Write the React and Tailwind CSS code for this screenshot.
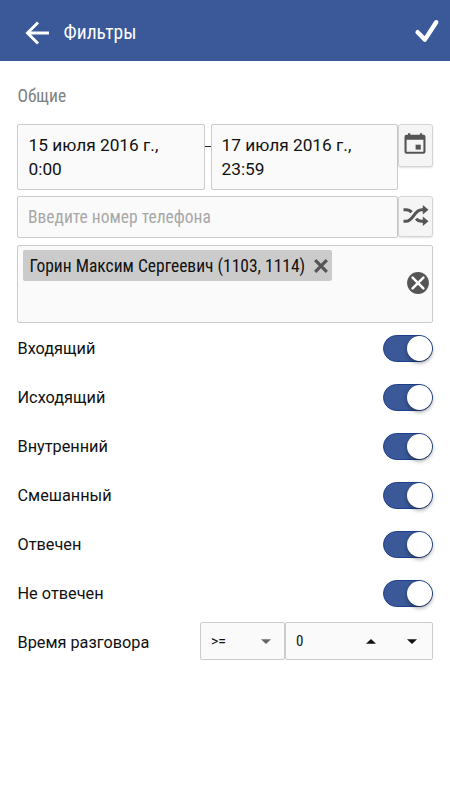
import React, { useState } from 'react';

const CALL_FILTERS = [
    { id: 'incoming', label: 'Входящий' },
    { id: 'outgoing', label: 'Исходящий' },
    { id: 'internal', label: 'Внутренний' },
    { id: 'mixed', label: 'Смешанный' },
    { id: 'answered', label: 'Отвечен' },
    { id: 'missed', label: 'Не отвечен' },
];

const App = () => {
    const [enabled, setEnabled] = useState(() => CALL_FILTERS.map((f) => f.id));

    const toggle = (id) =>
        setEnabled((prev) => (prev.includes(id) ? prev.filter((x) => x !== id) : [...prev, id]));

    return (
        <div className="w-full h-[800px] bg-white text-[#111] font-normal font-['Roboto','Liberation_Sans',sans-serif] overflow-hidden">
            {/* Header */}
            <header className="h-[61px] bg-[#3b5998] text-white flex items-center justify-between pl-[25px] pr-[9.5px] pt-[4px]">
                <div className="flex items-center">
                    <BackIcon />
                    <h1 className="ml-[13.5px] text-[19.5px] leading-6 pt-px font-normal [font-stretch:75%]">Фильтры</h1>
                </div>
                <CheckIcon />
            </header>

            <main className="px-[17px] pt-[23px]">
                <h2 className="pl-[0.5px] text-[17.5px] leading-[24px] text-[#808080] font-normal [font-stretch:75%]">Общие</h2>

                {/* Period */}
                <div className="flex items-start mt-[16px]">
                    <DateField className="w-[188px] pl-[10.5px]" date="15 июля 2016 г.," time="0:00" />
                    <span className="w-[6px] h-px mt-[22px] bg-[#222]" />
                    <DateField className="w-[187px] pl-[9.5px]" date="17 июля 2016 г.," time="23:59" />
                    <IconButton className="h-[43px]"><CalendarIcon /></IconButton>
                </div>

                {/* Phone number */}
                <div className="flex items-start mt-[6px]">
                    <input
                        className="w-[381px] h-[42px] px-[10px] bg-[#fafafa] border border-[#ccc] rounded-[2px] text-[17.5px] font-normal [font-stretch:75%] placeholder:text-[#a8a8a8] outline-none"
                        placeholder="Введите номер телефона"
                    />
                    <IconButton className="h-[41px]"><ShuffleIcon /></IconButton>
                </div>

                {/* Employees */}
                <div className="mt-[7px] h-[78px] flex justify-between bg-[#fafafa] border border-[#ccc] rounded-[2px] p-[5px] pt-[4px] pr-[3.5px]">
                    <div className="h-[31px] w-[309px] flex items-center justify-between bg-[#cbcbcb] rounded-[2px] pl-[6.5px] pr-[4px]">
                        <span className="text-[17.5px] leading-6 whitespace-nowrap font-normal [font-stretch:75%]">Горин Максим Сергеевич (1103, 1114)</span>
                        <RemoveIcon />
                    </div>
                    <button className="self-center -mt-px"><ClearIcon /></button>
                </div>

                {/* Call types */}
                <div className="mt-px">
                    {CALL_FILTERS.map((f) => (
                        <div key={f.id} className="h-[49px] flex items-center justify-between pl-[0.5px] pr-[0.5px]">
                            <span className="text-[16.3px] leading-6">{f.label}</span>
                            <Switch on={enabled.includes(f.id)} onClick={() => toggle(f.id)} />
                        </div>
                    ))}
                </div>

                {/* Talk time */}
                <div className="mt-[4px] flex items-center justify-between">
                    <span className="text-[16.3px] leading-6 pt-[3px] pl-[0.5px]">Время разговора</span>
                    <div className="flex">
                        <div className="w-[85px] h-[38px] flex items-center justify-between pl-[10px] pr-[13px] bg-[#fafafa] border border-[#ccc] rounded-[2px] text-[14px]">
                            <span>&gt;=</span>
                            <Triangle className="text-[#666]" />
                        </div>
                        <div className="w-[148px] h-[38px] flex items-center pl-[10px] bg-[#fafafa] border border-[#ccc] rounded-[2px] text-[15px]">
                            <span className="w-[70px] [font-stretch:75%]">0</span>
                            <Triangle className="rotate-180" />
                            <Triangle className="ml-[30.5px]" />
                        </div>
                    </div>
                </div>
            </main>
        </div>
    );
};

const DateField = ({ className, date, time }) => (
    <div className={`h-[66px] pt-[8px] bg-[#fafafa] border border-[#ccc] rounded-[2px] text-[17.3px] leading-6 ${className}`}>
        <div className="whitespace-nowrap">{date}</div>
        <div>{time}</div>
    </div>
);

const IconButton = ({ className, children }) => (
    <button className={`w-[35px] flex items-start justify-center bg-[#f5f5f5] border border-[#d4d4d4] rounded-[3px] shadow-[0_1px_2px_rgba(0,0,0,0.12)] ${className}`}>
        {children}
    </button>
);

const Switch = ({ on, onClick }) => (
    <button
        role="switch"
        aria-checked={on}
        onClick={onClick}
        className={`w-[50px] h-[27px] flex items-center rounded-full border border-[#1c3f8c] ${on ? 'bg-[#3b5998] justify-end' : 'bg-gray-300'}`}
    >
        <span className="size-[25px] rounded-full bg-white shadow-[0_2px_4px_rgba(0,0,0,0.4)]" />
    </button>
);

const Triangle = ({ className }) => (
    <svg className={className} width="10" height="5" viewBox="0 0 10 5" fill="currentColor">
        <path d="M0 .2h10L5 5z" />
    </svg>
);

const BackIcon = () => (
    <svg width="25" height="24" viewBox="0 0 25 24" fill="none" stroke="currentColor" strokeWidth="2.9">
        <path d="M13 1.5 2.5 12 13 22.5M2.5 12H24" />
    </svg>
);

const CheckIcon = () => (
    <svg className="mb-[4px]" width="28" height="26" viewBox="0 0 28 26" fill="none" stroke="currentColor" strokeWidth="4.4" strokeLinecap="round" strokeLinejoin="round">
        <path d="M4.6 14.2 11.9 21.6 23.2 4.2" />
    </svg>
);

const CalendarIcon = () => (
    <svg className="mt-[8px] -ml-px" width="22" height="22" viewBox="0 0 22 22" fill="#555">
        <path fillRule="evenodd" d="M4 .2h2.3v1.6h9.6V.2h2.3v1.6h1.3q2 0 2 2v15q0 2-2 2h-17q-2 0-2-2v-15q0-2 2-2H4zM2.6 6.8v12h16.8v-12z" />
        <path d="M11.6 11.7h5.2v4.9h-5.2z" />
    </svg>
);

const ShuffleIcon = () => (
    <svg className="mt-[8px]" width="26" height="22" viewBox="0 0 26 22" fill="none" stroke="#555" strokeWidth="3.1">
        <path d="M.5 16.3H3C10.5 16.3 11 4.8 18.8 4.8h1.7M.5 4.8H3q3.6 0 5.6 2.4M13.2 13.6q2 2.7 5.6 2.7h1.7" />
        <path fill="#555" stroke="none" d="m19.8.1 5.7 4.7-5.7 4.7zM19.8 11.6l5.7 4.7-5.7 4.7z" />
    </svg>
);

const RemoveIcon = () => (
    <svg width="14" height="14" viewBox="0 0 14 14" stroke="#555" strokeWidth="3.2">
        <path d="m1.2 1.2 11.6 11.6M12.8 1.2 1.2 12.8" />
    </svg>
);

const ClearIcon = () => (
    <svg width="22" height="22" viewBox="0 0 22 22">
        <circle cx="11" cy="11" r="10.9" fill="#555" />
        <path d="m5.6 5.6 10.8 10.8M16.4 5.6 5.6 16.4" stroke="#fff" strokeWidth="2.5" strokeLinecap="round" />
    </svg>
);

export default App;
